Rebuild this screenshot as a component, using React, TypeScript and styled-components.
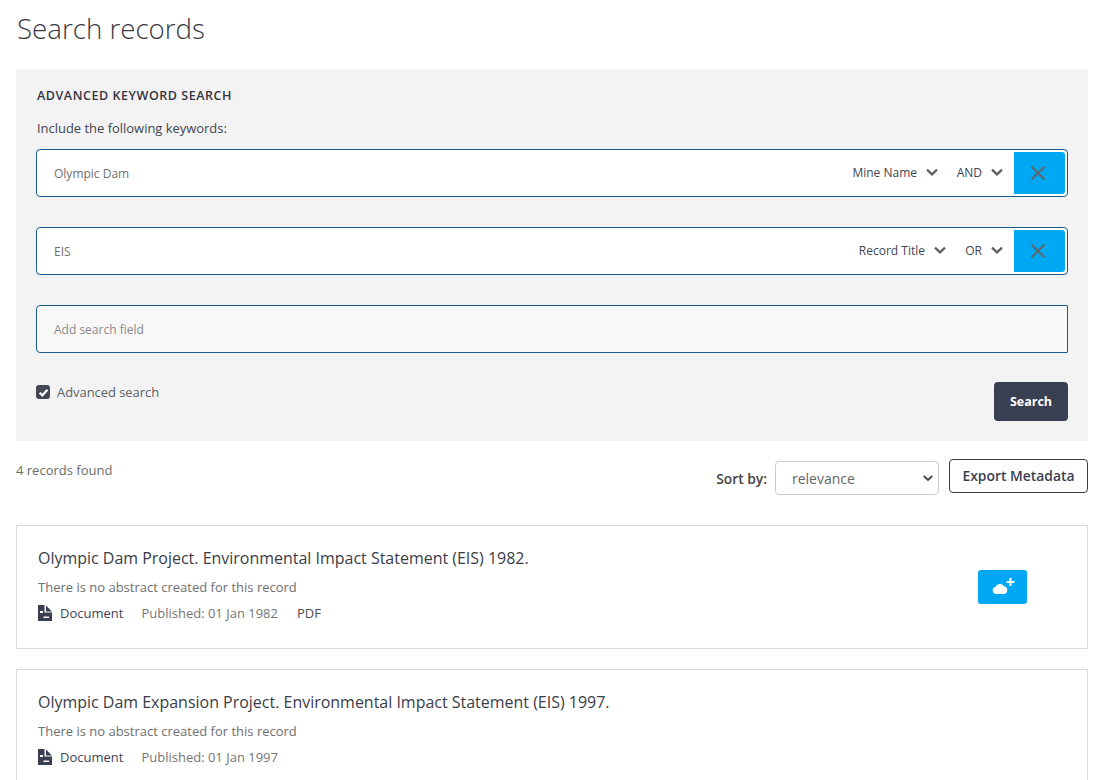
import React from "react";
import styled, { createGlobalStyle } from "styled-components";

const GlobalStyle = createGlobalStyle`
  html, body {
    margin: 0;
    padding: 0;
    background: #fff;
    overflow: hidden;
  }
  body {
    font-family: "Open Sans", "Liberation Sans", sans-serif;
    color: #3a4050;
  }
  * {
    box-sizing: border-box;
  }
`;

const Page = styled.div`
  width: 1072px;
  height: 780px;
  margin-left: 16px;
  overflow: hidden;
`;

const Title = styled.h1`
  margin: 0;
  height: 69px;
  padding-top: 9px;
  padding-left: 1px;
  font-size: 27.7px;
  line-height: 38px;
  font-weight: 300;
  color: #3a3a44;
`;

const SearchPanel = styled.section`
  height: 372px;
  padding: 18px 20px 20px;
  background: #f3f3f3;
`;

const PanelHeading = styled.h2`
  margin: 0;
  padding-left: 1px;
  font-size: 12.5px;
  line-height: 18px;
  font-weight: 600;
  letter-spacing: 0.55px;
  color: #333640;
`;

const FieldLabel = styled.div`
  margin-top: 15px;
  margin-bottom: 12px;
  padding-left: 1px;
  font-size: 12.95px;
  line-height: 17px;
  color: #3f4450;
`;

const Fields = styled.div`
  display: grid;
  grid-gap: 30px;
`;

const Field = styled.div<{ $empty?: boolean }>`
  height: 48px;
  display: flex;
  align-items: center;
  padding: 2px 2px 2px 17px;
  background: ${(props) => (props.$empty ? "#f8f8f8" : "#fff")};
  border: 1px solid #195a8a;
  border-radius: ${(props) => (props.$empty ? "4px 1px 1px 4px" : "4px")};
`;

const FieldText = styled.div<{ $empty?: boolean }>`
  flex: 1;
  font-size: 12px;
  color: ${(props) => (props.$empty ? "#8a8a8a" : "#6f6f6f")};
`;

const Dropdown = styled.div<{ $width: number }>`
  width: ${(props) => props.$width}px;
  display: flex;
  align-items: center;
  justify-content: flex-end;
  gap: 9px;
  padding-bottom: 2px;
  font-size: 12px;
  color: #404552;
`;

const RemoveButton = styled.button`
  width: 51px;
  height: 42px;
  margin-left: 11px;
  display: flex;
  align-items: center;
  justify-content: center;
  padding: 0 4px 0 0;
  border: none;
  border-radius: 0 3px 3px 0;
  background: #00a8f4;
`;

const PanelFooter = styled.div`
  margin-top: 29px;
  display: flex;
  justify-content: space-between;
  align-items: flex-start;
`;

const CheckLabel = styled.label`
  display: flex;
  align-items: center;
  gap: 7px;
  height: 20px;
  font-size: 12.9px;
  color: #5b5f68;
`;

const CheckBox = styled.span`
  width: 14px;
  height: 14px;
  display: flex;
  align-items: center;
  justify-content: center;
  border-radius: 3px;
  background: #444854;
`;

const SearchButton = styled.button`
  width: 74px;
  height: 39px;
  border: none;
  border-radius: 4px;
  background: #383f50;
  color: #fff;
  font-family: inherit;
  font-size: 12.5px;
  font-weight: 700;
`;

const ResultBar = styled.div`
  height: 84px;
  padding-top: 18px;
  display: flex;
  align-items: flex-start;
  justify-content: space-between;
`;

const ResultCount = styled.div`
  font-size: 13px;
  line-height: 22px;
  color: #6a6a6a;
`;

const SortArea = styled.div`
  display: flex;
  align-items: flex-start;
`;

const SortLabel = styled.span`
  margin-top: 10px;
  margin-right: 8px;
  font-size: 13.8px;
  line-height: 20px;
  font-weight: 600;
  color: #444;
`;

const SortSelect = styled.div`
  width: 164px;
  height: 34px;
  margin-top: 2px;
  display: flex;
  align-items: center;
  justify-content: space-between;
  padding: 0 5px 0 16px;
  background: #fff;
  border: 1px solid #ccc;
  border-radius: 4px;
  font-size: 14px;
  color: #666;
`;

const ExportButton = styled.button`
  width: 139px;
  height: 34px;
  margin-left: 10px;
  padding: 0 0 2px;
  background: #fff;
  border: 1px solid #383f50;
  border-radius: 4px;
  font-family: inherit;
  font-size: 13.9px;
  font-weight: 600;
  color: #383f50;
`;

const RecordList = styled.div`
  display: grid;
  grid-gap: 20px;
`;

const RecordCard = styled.article`
  position: relative;
  height: 124px;
  padding: 20px 21px;
  border: 1px solid #dcdcdc;
`;

const RecordTitle = styled.h3`
  margin: 0;
  font-size: 15.97px;
  line-height: 24px;
  font-weight: 400;
  color: #3a3d48;
`;

const RecordAbstract = styled.p`
  margin: 8px 0 0;
  font-size: 13px;
  line-height: 18px;
  color: #6f6f6f;
`;

const MetaRow = styled.div`
  margin-top: 7.5px;
  display: flex;
  align-items: center;
  font-size: 13px;
  line-height: 18px;
`;

const MetaType = styled.span`
  display: flex;
  align-items: center;
  gap: 8px;
  margin-right: 18px;
  color: #3f4450;
`;

const MetaDate = styled.span`
  margin-right: 19px;
  color: #767676;
`;

const MetaFormat = styled.span`
  color: #4a4a4a;
`;

const SaveButton = styled.button`
  position: absolute;
  top: 44px;
  right: 60px;
  width: 49px;
  height: 34px;
  display: flex;
  align-items: center;
  justify-content: center;
  padding: 0;
  border: none;
  border-radius: 3px;
  background: #00a8f4;
`;

const Chevron = ({ size = 12, color = "#5f5f5f" }: { size?: number; color?: string }) => (
  <svg width={size} height={size} viewBox="0 0 12 12" fill="none">
    <path d="M1 3.6 6 8.4l5-4.8" stroke={color} strokeWidth="2.2" />
  </svg>
);

const CloseIcon = () => (
  <svg width="16" height="16" viewBox="0 0 16 16" fill="none">
    <path d="M1.5 1.5l13 13M14.5 1.5l-13 13" stroke="#5f666e" strokeWidth="2" />
  </svg>
);

const CheckMark = () => (
  <svg width="11" height="11" viewBox="0 0 10 10" fill="none">
    <path d="M1.5 5.2 4 7.6l4.6-5" stroke="#fff" strokeWidth="2" />
  </svg>
);

const DocumentIcon = () => (
  <svg width="14" height="16" viewBox="0 0 14 16">
    <path
      fill="#383f50"
      fillRule="evenodd"
      d="M0 0h6.5v7.5H14V16H0zM2 6v2h3V6zM5.5 11.5V13H11v-1.5z"
    />
    <path fill="#383f50" d="M8 0.5 14 6.5H8z" />
  </svg>
);

const CloudPlusIcon = () => (
  <svg width="24" height="20" viewBox="0 0 24 20">
    <path
      fill="#fff"
      d="M5 17a3.5 3.5 0 0 1-.6-6.9A4.8 4.8 0 0 1 13 9.3a3.9 3.9 0 0 1 0 7.7z"
    />
    <path d="M19.5 1v8M15.5 5h8" stroke="#fff" strokeWidth="2" />
  </svg>
);

const keywordRows = [
  { text: "Olympic Dam", field: "Mine Name", fieldWidth: 90, op: "AND", opWidth: 65 },
  { text: "EIS", field: "Record Title", fieldWidth: 90, op: "OR", opWidth: 57 },
];

const records = [
  {
    title: "Olympic Dam Project. Environmental Impact Statement (EIS) 1982.",
    date: "01 Jan 1982",
    format: "PDF",
    canSave: true,
  },
  {
    title: "Olympic Dam Expansion Project. Environmental Impact Statement (EIS) 1997.",
    date: "01 Jan 1997",
  },
];

const App = () => {
  return (
    <Page>
      <GlobalStyle />
      <Title>Search records</Title>

      <SearchPanel>
        <PanelHeading>ADVANCED KEYWORD SEARCH</PanelHeading>
        <FieldLabel>Include the following keywords:</FieldLabel>
        <Fields>
          {keywordRows.map((row) => (
            <Field key={row.text}>
              <FieldText>{row.text}</FieldText>
              <Dropdown $width={row.fieldWidth}>
                {row.field}
                <Chevron />
              </Dropdown>
              <Dropdown $width={row.opWidth}>
                {row.op}
                <Chevron />
              </Dropdown>
              <RemoveButton>
                <CloseIcon />
              </RemoveButton>
            </Field>
          ))}
          <Field $empty>
            <FieldText $empty>Add search field</FieldText>
          </Field>
        </Fields>
        <PanelFooter>
          <CheckLabel>
            <CheckBox>
              <CheckMark />
            </CheckBox>
            Advanced search
          </CheckLabel>
          <SearchButton>Search</SearchButton>
        </PanelFooter>
      </SearchPanel>

      <ResultBar>
        <ResultCount>4 records found</ResultCount>
        <SortArea>
          <SortLabel>Sort by:</SortLabel>
          <SortSelect>
            relevance
            <Chevron size={10} color="#444" />
          </SortSelect>
          <ExportButton>Export Metadata</ExportButton>
        </SortArea>
      </ResultBar>

      <RecordList>
        {records.map((record) => (
          <RecordCard key={record.title}>
            <RecordTitle>{record.title}</RecordTitle>
            <RecordAbstract>There is no abstract created for this record</RecordAbstract>
            <MetaRow>
              <MetaType>
                <DocumentIcon />
                Document
              </MetaType>
              <MetaDate>Published: {record.date}</MetaDate>
              {record.format && <MetaFormat>{record.format}</MetaFormat>}
            </MetaRow>
            {record.canSave && (
              <SaveButton>
                <CloudPlusIcon />
              </SaveButton>
            )}
          </RecordCard>
        ))}
      </RecordList>
    </Page>
  );
};

export default App;
